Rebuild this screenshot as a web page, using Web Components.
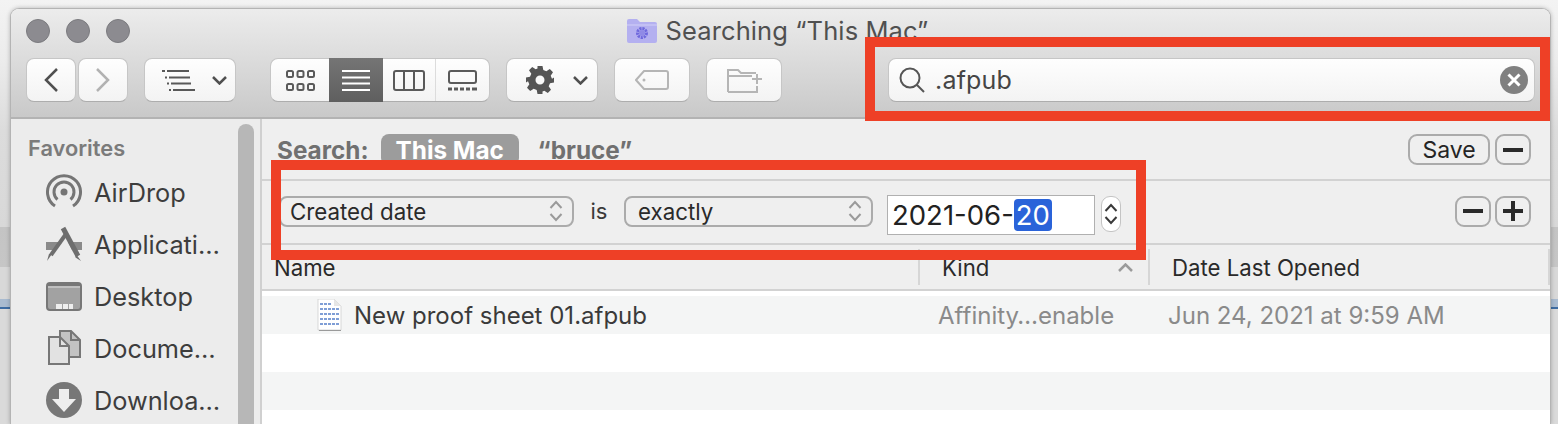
<!DOCTYPE html>
<html>
<head>
<meta charset="utf-8">
<title>Searching This Mac</title>
<style>
html,body{margin:0;padding:0;height:100%;overflow:hidden}
body{font-family:Inter,"Liberation Sans",sans-serif}
svg{display:block}
</style>
</head>
<body>
<desk-page>
  <finder-window>
    <tool-bar slot="bar"></tool-bar>
    <side-bar slot="side">
      <side-item label="AirDrop"><svg viewBox="0 0 36 36" width="36" height="36" fill="none" stroke="#757575" stroke-width="3"><path d="M9 32A16.500 16.500 0 1 1 27 32"/><path d="M11.500 25.500A10 10 0 1 1 24.500 25.500"/><circle cx="18" cy="18" r="3.500" fill="#757575" stroke="none"/></svg></side-item>
      <side-item label="Applicati…"><svg viewBox="0 0 36 36" width="36" height="36"><path d="M0 16H14L10 24H0ZM22 16H36V24H26Z" fill="#8a8a8a"/><path d="M17 2L32 30" stroke="#6e6e6e" stroke-width="5"/><path d="M30 28L35 35L29.500 31.500Z" fill="#6e6e6e"/><path d="M20 8L5 29" stroke="#6e6e6e" stroke-width="4"/><path d="M6 28L1 35L3 28Z" fill="#6e6e6e"/></svg></side-item>
      <side-item label="Desktop"><svg viewBox="0 0 36 36" width="36" height="36"><rect x="1" y="5" width="34" height="27" rx="3" fill="#a2a2a2" stroke="#777" stroke-width="2"/><path d="M2 9H34" stroke="#ddd" stroke-width="1"/><path d="M2 6H34V8H2Z" fill="#777"/><path d="M10 26H16V31H10ZM17 26H22V31H17ZM23 26H27V31H23Z" fill="#eee"/></svg></side-item>
      <side-item label="Docume…"><svg viewBox="0 0 36 36" width="36" height="36"><path d="M14 1H25L34 10V27H14Z" fill="#c3c3c3" stroke="#777" stroke-width="2"/><path d="M3 7H14L23 16V34H3Z" fill="#e2e2e2" stroke="#777" stroke-width="2"/><path d="M14 7V16H23" fill="none" stroke="#777" stroke-width="2"/><path d="M25 1V10H34" fill="none" stroke="#777" stroke-width="2"/></svg></side-item>
      <side-item label="Downloa…"><svg viewBox="0 0 36 36" width="36" height="36"><circle cx="18" cy="18" r="18" fill="#777"/><path d="M13 7H23V17H30L18 30L6 17H13Z" fill="#eee"/></svg></side-item>
    </side-bar>
    <search-pane slot="main"></search-pane>
  </finder-window>
  <mark-box style="--x:865px;--y:37px;--w:685px;--h:84px"></mark-box>
  <mark-box style="--x:271px;--y:160px;--w:875px;--h:100px"></mark-box>
</desk-page>

<script>
const FONT = 'Inter,"Liberation Sans",sans-serif';

function shadow(el, html){
    const sd = el.attachShadow({ mode:'open' });
    sd.innerHTML = html;
    return sd;
}

class DeskPage extends HTMLElement {
    connectedCallback(){
        shadow(this, `<style>
        :host{display:block;position:relative;width:1558px;height:424px;overflow:hidden;box-sizing:border-box;padding:8px 7px 0 10px;
            background:linear-gradient(#f3f3f3 0,#ececec 60px,#dcdcdc 130px,#d8d8d8 227px,#c4c4c4 227px,#c6c6c6 267px,#d8d8d8 267px,#d8d8d8 299px,#a9bbd0 299px,#a9bbd0 307px,#3d6ca3 307px,#3d6ca3 309px,#dadada 309px);}
        </style><slot></slot>`);
    }
}

class MarkBox extends HTMLElement {
    connectedCallback(){
        shadow(this, `<style>
        :host{position:absolute;left:var(--x);top:var(--y);width:var(--w);height:var(--h);box-sizing:border-box;border:10px solid #ee4026;}
        </style>`);
    }
}

class FinderWindow extends HTMLElement {
    connectedCallback(){
        shadow(this, `<style>
        :host{display:flex;flex-direction:column;height:416px;box-sizing:border-box;border:1px solid #b4b4b4;border-bottom:0;border-radius:9px 9px 0 0;overflow:hidden;font-family:${FONT};background:#fff;box-shadow:0 0 4px rgba(0,0,0,.25);}
        header{height:110px;box-sizing:border-box;flex:none;background:linear-gradient(#ececec,#c9c9c9);border-bottom:2px solid #b3b3b3;}
        .title{display:grid;grid-template-columns:1fr auto 1fr;align-items:center;height:49px;}
        .lights{display:flex;gap:16px;padding-left:15px;margin-top:-6px;}
        .lights i{width:24px;height:24px;border-radius:50%;box-sizing:border-box;background:#8c8b90;border:1px solid #7b7b7f;}
        .name{display:flex;align-items:center;gap:9px;color:#505050;font-size:25.500px;letter-spacing:.1px;margin:-7px 6px 0 0;white-space:nowrap;}
        .body{display:flex;flex:1;min-height:0;}
        </style>
        <header>
          <div class="title">
            <div class="lights"><i></i><i></i><i></i></div>
            <div class="name"><svg viewBox="0 0 30 25" width="30" height="25"><path d="M0 3Q0 1 2 1H10L13 4H28Q30 4 30 6V23Q30 25 28 25H2Q0 25 0 23Z" fill="#b4b0f0"/><path d="M0 7H30" stroke="#c9c6f6" stroke-width="1.500"/><circle cx="15" cy="15" r="4.500" fill="none" stroke="#6f69dd" stroke-width="3" stroke-dasharray="2.200 .8"/><circle cx="15" cy="15" r="3" fill="#8f8ae6"/></svg><span>Searching “This Mac”</span></div>
            <div></div>
          </div>
          <slot name="bar"></slot>
        </header>
        <div class="body"><slot name="side"></slot><slot name="main"></slot></div>`);
    }
}

class ToolBar extends HTMLElement {
    connectedCallback(){
        shadow(this, `<style>
        :host{display:flex;align-items:stretch;height:44px;padding-left:15px;padding-right:15px;font-family:${FONT};}
        .b{display:flex;align-items:center;justify-content:center;box-sizing:border-box;background:linear-gradient(#fefefe,#f3f3f3);border:1px solid #c6c6c6;border-bottom-color:#adadad;border-radius:8px;}
        .left{justify-content:flex-start;}
        .seg{display:flex;align-items:stretch;width:220px;margin:0 16px 0 34px;padding:0;}
        .seg div{display:flex;align-items:center;justify-content:center;}
        .seg .on{background:linear-gradient(#757575,#5f5f5f);margin:-1px 0;width:54px;}
        .search{flex:1;justify-content:flex-start;margin-left:106px;padding:0 6px 0 10px;}
        .search span{font-size:25px;color:#454545;margin-left:10px;letter-spacing:.2px;flex:1;}
        </style>
        <div class="b" style="width:50px"><svg width="16" height="24" viewBox="0 0 16 24" fill="none" stroke="#505050" stroke-width="2.500"><path d="M14 1L3 12L14 23"/></svg></div>
        <div class="b" style="width:50px;margin-left:2px"><svg width="16" height="24" viewBox="0 0 16 24" fill="none" stroke="#b2b2b2" stroke-width="2.500"><path d="M2 1L13 12L2 23"/></svg></div>
        <div class="b left" style="width:92px;margin-left:16px;gap:17px;padding-left:17px"><svg width="33" height="22" viewBox="0 0 33 22" stroke="#585858" stroke-width="2" fill="none"><path d="M0 2H3M5 2H27M3 8.500H5M7 8.500H28M5 14.500H7M9 14.500H29M7 21H9M11 21H33"/></svg><svg width="15" height="9" viewBox="0 0 15 9" fill="none" stroke="#505050" stroke-width="2.500"><path d="M1 1L7.500 7.500L14 1"/></svg></div>
        <div class="b seg">
          <div style="width:58px"><svg width="29" height="21" viewBox="0 0 29 21" fill="none" stroke="#5a5a5a" stroke-width="2"><rect x="1" y="1" width="6" height="6" rx="1.500"/><rect x="11.500" y="1" width="6" height="6" rx="1.500"/><rect x="22" y="1" width="6" height="6" rx="1.500"/><rect x="1" y="14" width="6" height="6" rx="1.500"/><rect x="11.500" y="14" width="6" height="6" rx="1.500"/><rect x="22" y="14" width="6" height="6" rx="1.500"/></svg></div>
          <div class="on"><svg width="28" height="21" viewBox="0 0 28 21" stroke="#fff" stroke-width="2"><path d="M0 1H28M0 7.500H28M0 13.500H28M0 20H28"/></svg></div>
          <div style="width:53px;border-right:1px solid #dcdcdc;box-sizing:border-box"><svg width="32" height="21" viewBox="0 0 32 21" fill="none" stroke="#5a5a5a" stroke-width="2"><rect x="1" y="1" width="30" height="19" rx="2"/><path d="M11 1V20M21 1V20"/></svg></div>
          <div style="flex:1"><svg width="29" height="21" viewBox="0 0 29 21" fill="none" stroke="#5a5a5a" stroke-width="2"><rect x="1" y="1" width="27" height="12" rx="2"/><path d="M0 19H4M6 19H10M12 19H16M18 19H22M24 19H29" stroke-width="3"/></svg></div>
        </div>
        <div class="b left" style="width:92px;gap:19px;padding-left:19px"><svg width="28" height="28" viewBox="0 0 28 28"><path fill="#555" fill-rule="evenodd" d="M11.500 0H16.500L17.300 4L20.300 5.300L23.800 3L27 6.200L24.700 9.700L26 12.700L28 11.500V16.500L24 17.300L22.700 20.300L25 23.800L21.800 27L18.300 24.700L16.500 25.500V28H11.500L10.700 24L7.700 22.700L4.200 25L1 21.800L3.300 18.300L2 15.300L0 16.500V11.500L4 10.700L5.300 7.700L3 4.200L6.200 1L9.700 3.300L11.500 2.500ZM14 9.500A4.500 4.500 0 1 0 14 18.500A4.500 4.500 0 1 0 14 9.500Z"/></svg><svg width="15" height="9" viewBox="0 0 15 9" fill="none" stroke="#505050" stroke-width="2.500"><path d="M1 1L7.500 7.500L14 1"/></svg></div>
        <div class="b" style="width:76px;margin-left:16px"><svg width="34" height="20" viewBox="0 0 34 20" fill="none" stroke="#b5b5b5" stroke-width="2"><path d="M1 10L9 1H31Q33 1 33 3V17Q33 19 31 19H9Z"/><circle cx="9" cy="10" r="1.500" fill="#b5b5b5" stroke="none"/></svg></div>
        <div class="b" style="width:76px;margin-left:16px;padding-left:2px"><svg width="36" height="25" viewBox="0 0 36 25" fill="none" stroke="#b5b5b5" stroke-width="2"><path d="M1 24V2H11L14 5H29M1 8H25M1 24H30V18"/><path d="M30 6V16M25 11H35"/></svg></div>
        <div class="b search"><svg width="26" height="26" viewBox="0 0 26 26" fill="none" stroke="#555" stroke-width="2"><circle cx="11" cy="11" r="9.500"/><path d="M18 18L25 25"/></svg><span>.afpub</span><svg width="28" height="28" viewBox="0 0 28 28"><circle cx="14" cy="14" r="14" fill="#808080"/><path d="M8.500 8.500L19.500 19.500M19.500 8.500L8.500 19.500" stroke="#fff" stroke-width="3"/></svg></div>`);
    }
}

class SideBar extends HTMLElement {
    connectedCallback(){
        shadow(this, `<style>
        :host{display:flex;width:251px;height:100%;box-sizing:border-box;flex:none;background:#ececec;border-right:2px solid #d0d0d0;font-family:${FONT};}
        .list{flex:1;padding:14px 0 0 18px;}
        h4{margin:0 0 3px -1px;font-size:21.800px;line-height:30px;font-weight:600;color:#7b7b7b;}
        .track{width:16px;margin:5px 6px 0 0;background:#b7b7b7;border-radius:8px 8px 0 0;}
        </style>
        <div class="list"><h4>Favorites</h4><slot></slot></div>
        <div class="track"></div>`);
    }
}

class SideItem extends HTMLElement {
    connectedCallback(){
        shadow(this, `<style>
        :host{display:flex;align-items:center;gap:12px;height:52px;padding-left:17px;font-size:25.300px;color:#3d3d3d;white-space:nowrap;font-family:${FONT};}
        </style><slot></slot><span>${this.getAttribute('label')}</span>`);
    }
}

class UpDown extends HTMLElement {
    connectedCallback(){
        shadow(this, `<style>:host{display:block;flex:none;line-height:0}</style>
        <svg width="14" height="22" viewBox="0 0 14 22" fill="none" stroke="${this.getAttribute('color') || '#9a9a9a'}" stroke-width="2"><path d="M1.500 8L7 2L12.500 8M1.500 14L7 20L12.500 14"/></svg>`);
    }
}

class SelectBox extends HTMLElement {
    connectedCallback(){
        shadow(this, `<style>
        :host{display:flex;align-items:center;justify-content:space-between;box-sizing:border-box;height:31px;border:2px solid #ababab;border-radius:8px;padding:0 9px 0 9px;font-size:22.300px;font-weight:400;color:#2a2a2a;font-family:${FONT};}
        </style><slot></slot><up-down></up-down>`);
    }
}

class RoundBtn extends HTMLElement {
    connectedCallback(){
        shadow(this, `<style>
        :host{display:flex;align-items:center;justify-content:center;box-sizing:border-box;height:31px;min-width:36px;border:2px solid #ababab;border-radius:9px;font-size:23px;font-weight:400;color:#252525;font-family:${FONT};}
        </style><slot></slot>`);
    }
}

class SearchPane extends HTMLElement {
    connectedCallback(){
        shadow(this, `<style>
        :host{display:flex;flex-direction:column;flex:1;min-width:0;height:100%;background:#efefef;font-family:${FONT};}
        .scope{display:flex;align-items:flex-start;height:62px;flex:none;box-sizing:border-box;border-bottom:2px solid #d2d2d2;padding:15px 19px 0 15px;font-size:24.300px;font-weight:700;color:#707070;white-space:nowrap;}
        .scope b{font-weight:700;margin-top:1px}
        .scope .pill{background:#9c9c9c;color:#fff;border-radius:8px;height:32px;padding:1px 15px 0;margin:0 0 0 12px;box-sizing:border-box;width:138px;}
        .scope .q{margin-left:19px}
        .sp{flex:1}
        .crit{display:flex;align-items:center;height:64px;flex:none;box-sizing:border-box;border-bottom:2px solid #d2d2d2;padding:0 19px 2px 17px;font-size:22px;color:#3a3a3a;}
        .is{width:50px;text-align:center}
        .date{display:flex;align-items:center;box-sizing:border-box;width:208px;height:40px;margin:8px 0 0 14px;border:1px solid #b0b0b0;background:#fff;padding-left:4px;font-size:27.500px;color:#222;}
        .date em{font-style:normal;background:#2a63d9;color:#fff;border-radius:4px;height:32px;line-height:32px;padding:0 2px;}
        .step{display:flex;align-items:center;justify-content:center;box-sizing:border-box;width:20px;height:36px;margin:5px 0 0 6px;background:#fff;border:1px solid #c4c4c4;border-radius:9px;}
        .head{display:flex;align-items:center;height:46px;flex:none;box-sizing:border-box;border-bottom:2px solid #d2d2d2;font-size:22.200px;color:#2a2a2a;}
        .head div{height:36px;display:flex;align-items:center;box-sizing:border-box;padding-top:1px;}
        .rows{flex:1;background:#fff;padding-top:5px;}
        .row{display:flex;align-items:center;height:38px;font-size:24px;color:#3a3a3a;white-space:nowrap;}
        .row.alt{background:#f4f5f5}
        .dim{color:#8a8a8a;}
        </style>
        <div class="scope">
          <b>Search:</b><b class="pill">This Mac</b><b class="q">“bruce”</b><span class="sp"></span>
          <round-btn style="width:82px">Save</round-btn>
          <round-btn style="margin-left:5px"><svg width="20" height="4"><rect width="20" height="4" fill="#2a2a2a"/></svg></round-btn>
        </div>
        <div class="crit">
          <select-box style="width:295px">Created date</select-box>
          <span class="is">is</span>
          <select-box style="width:249px;padding-left:12px">exactly</select-box>
          <div class="date"><span>2021-06-</span><em>20</em></div>
          <div class="step"><up-down color="#3a3a3a"></up-down></div>
          <span class="sp"></span>
          <round-btn><svg width="20" height="4"><rect width="20" height="4" fill="#2a2a2a"/></svg></round-btn>
          <round-btn style="margin-left:4px"><svg width="20" height="20"><path d="M8 0H12V8H20V12H12V20H8V12H0V8H8Z" fill="#2a2a2a"/></svg></round-btn>
        </div>
        <div class="head">
          <div style="width:658px;padding-left:12px;border-right:2px solid #d6d6d6">Name</div>
          <div style="width:230px;padding-left:22px;border-right:2px solid #d6d6d6;justify-content:space-between;padding-right:15px"><span>Kind</span><svg width="15" height="9" viewBox="0 0 15 9" fill="none" stroke="#9a9a9a" stroke-width="2.500"><path d="M1 8L7.500 1.500L14 8"/></svg></div>
          <div style="flex:1;padding-left:22px;border-right:2px solid #d6d6d6">Date Last Opened</div>
        </div>
        <div class="rows">
          <div class="row alt">
            <span style="width:55px;flex:none"></span>
            <svg width="25" height="32" viewBox="0 0 25 32" style="flex:none;margin-right:12px"><path d="M1 0H17L24 7V31H1Z" fill="#fff" stroke="#cfcfcf" stroke-width=".8"/><path d="M3 5H15M3 10H22M3 15H22M3 20H22M3 25H22" stroke="#7f9ed6" stroke-width="2.200" stroke-dasharray="3 1"/><path d="M17 0V7H24" fill="#e6e6e6"/><path d="M2 31.500H24" stroke="#9a9a9a"/></svg>
            <span style="width:584px;flex:none">New proof sheet 01.afpub</span>
            <span class="dim" style="width:230px;flex:none">Affinity…enable</span>
            <span class="dim">Jun 24, 2021 at 9:59 AM</span>
          </div>
          <div class="row"></div>
          <div class="row alt"></div>
        </div>`);
    }
}

customElements.define('desk-page', DeskPage);
customElements.define('mark-box', MarkBox);
customElements.define('finder-window', FinderWindow);
customElements.define('tool-bar', ToolBar);
customElements.define('side-bar', SideBar);
customElements.define('side-item', SideItem);
customElements.define('up-down', UpDown);
customElements.define('select-box', SelectBox);
customElements.define('round-btn', RoundBtn);
customElements.define('search-pane', SearchPane);
</script>
</body>
</html>
